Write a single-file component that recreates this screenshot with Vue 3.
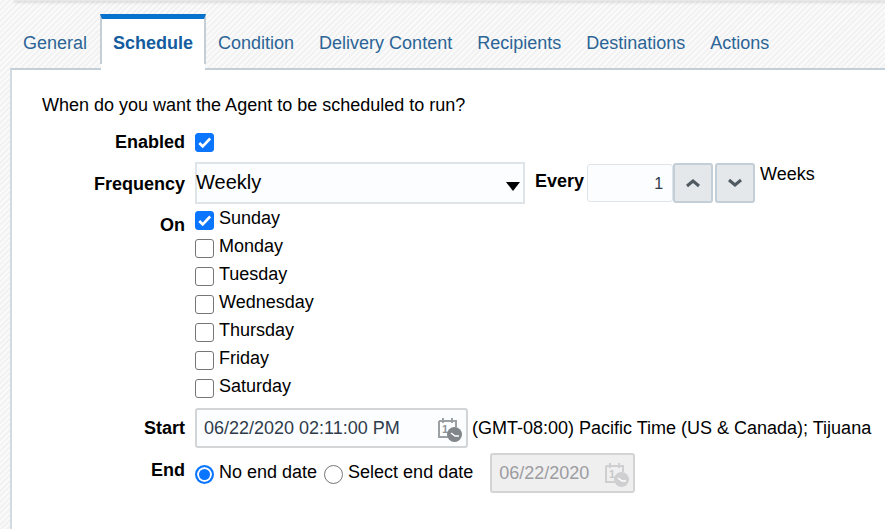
<template>
  <div class="page">
    <div class="top-shadow"></div>

    <!-- tabs -->
    <nav class="tabs">
      <a
        v-for="tab in tabs"
        :key="tab"
        href="javascript:;"
        class="tab"
        :class="{ active: tab === 'Schedule' }"
      >{{ tab }}</a>
    </nav>

    <section class="panel">
      <p class="question">When do you want the Agent to be scheduled to run?</p>

      <div class="form">
        <div class="row row-enabled">
          <label class="lbl">Enabled</label>
          <span class="cb on"><svg viewBox="0 0 18 18"><path d="M3.5 9.5l3.6 3.6L15 4.8" /></svg></span>
        </div>

        <div class="row row-freq">
          <label class="lbl freq-lbl">Frequency</label>
          <div class="select">
            <span class="select-value">Weekly</span>
            <i class="caret"></i>
          </div>
          <label class="lbl every">Every</label>
          <div class="number">1</div>
          <button class="spin first">
            <svg viewBox="0 0 14 10"><path d="M1 8l6-5 6 5" /></svg>
          </button>
          <button class="spin">
            <svg viewBox="0 0 14 10"><path d="M1 2l6 5 6-5" /></svg>
          </button>
          <span class="weeks">Weeks</span>
        </div>

        <div class="row row-on">
          <label class="lbl on-lbl">On</label>
          <ul class="days">
            <li v-for="day in days" :key="day.name">
              <span class="cb" :class="{ on: day.checked }">
                <svg v-if="day.checked" viewBox="0 0 18 18"><path d="M3.5 9.5l3.6 3.6L15 4.8" /></svg>
              </span>
              <span class="day-name">{{ day.name }}</span>
            </li>
          </ul>
        </div>

        <div class="row row-start">
          <label class="lbl">Start</label>
          <div class="date start-date">
            <span>06/22/2020 02:11:00 PM</span>
            <svg class="cal" viewBox="0 0 26 28">
              <path class="cal-line" d="M2 5h17v6M2 5v16h9M6 2v5M15 2v5" />
              <text x="5" y="17" class="cal-num">1</text>
              <circle cx="17.5" cy="18.5" r="7.5" class="cal-disc" />
              <path class="cal-hand" d="M14 17l4 3h4" />
            </svg>
          </div>
          <span class="zone">(GMT-08:00) Pacific Time (US &amp; Canada); Tijuana</span>
        </div>

        <div class="row row-end">
          <label class="lbl end-lbl">End</label>
          <span class="radio on"></span>
          <span class="radio-text">No end date</span>
          <span class="radio second"></span>
          <span class="radio-text">Select end date</span>
          <div class="date end-date">
            <span>06/22/2020</span>
            <svg class="cal" viewBox="0 0 26 28">
              <path class="cal-line" d="M2 5h17v6M2 5v16h9M6 2v5M15 2v5" />
              <text x="5" y="17" class="cal-num">1</text>
              <circle cx="17.5" cy="18.5" r="7.5" class="cal-disc" />
              <path class="cal-hand" d="M14 17l4 3h4" />
            </svg>
          </div>
        </div>
      </div>
    </section>
  </div>
</template>

<script setup>
const tabs = ['General', 'Schedule', 'Condition', 'Delivery Content', 'Recipients', 'Destinations', 'Actions'];

const days = [
  { name: 'Sunday', checked: true },
  { name: 'Monday', checked: false },
  { name: 'Tuesday', checked: false },
  { name: 'Wednesday', checked: false },
  { name: 'Thursday', checked: false },
  { name: 'Friday', checked: false },
  { name: 'Saturday', checked: false },
];
</script>

<style>
html, body {
  margin: 0;
  height: 100%;
  overflow: hidden;
}
</style>

<style scoped>
.page {
  position: relative;
  width: 885px;
  height: 529px;
  overflow: hidden;
  font-family: "Liberation Sans", Arial, sans-serif;
  font-size: 18px;
  color: #000;
  background: repeating-linear-gradient(135deg, #fafafa 0, #fafafa 2px, #f2f2f2 2px, #f2f2f2 4px);
}

.top-shadow {
  position: absolute;
  top: 0;
  left: 14px;
  right: 0;
  height: 1px;
  background: #e8e8e8;
  box-shadow: 0 1px 3px rgba(0, 0, 0, 0.3);
}

.tabs {
  display: flex;
  height: 54px;
  padding: 14px 0 0 11px;
}

.tab {
  box-sizing: border-box;
  height: 54px;
  padding: 5px 13px 0 12px;
  line-height: 49px;
  color: #2b6496;
  text-decoration: none;
  white-space: nowrap;
}

.tab:first-child {
  padding-right: 1px;
  margin-right: 0;
  width: 89px;
}

.tab.active {
  position: relative;
  z-index: 1;
  height: 50px;
  padding: 0 11px;
  border-top: 5px solid #0572ce;
  border-left: 2px solid #c4ced7;
  border-right: 2px solid #c4ced7;
  background: #fff;
  font-weight: 700;
  color: #145c9e;
}

/* white foot of the active tab, covers the panel border */
.tab.active::after {
  content: "";
  position: absolute;
  left: -1px;
  right: -1px;
  top: 45px;
  height: 6px;
  background: #fff;
}

.panel {
  box-sizing: border-box;
  height: 461px;
  margin-left: 10px;
  padding: 24px 0 0 30px;
  border-top: 2px solid #c4ced7;
  border-left: 2px solid #d3dbe2;
  background: #fff;
}

.question {
  margin: 0;
  line-height: 22px;
}

.form {
  margin-top: 15px;
  margin-left: -42px;
  color: #000;
}

.row {
  display: flex;
}

.lbl {
  flex: none;
  width: 185px;
  text-align: right;
  font-weight: 700;
  white-space: nowrap;
}

.row-enabled {
  height: 22px;
  align-items: center;
}

.row-enabled .cb {
  margin-left: 10px;
}

.cb {
  box-sizing: border-box;
  display: inline-flex;
  flex: none;
  width: 19px;
  height: 19px;
  border: 1px solid #767676;
  border-radius: 3px;
  background: #fff;
}

.cb.on {
  border-color: #0a75ff;
  background: #0a75ff;
}

.cb svg {
  width: 100%;
  height: 100%;
}

.cb path {
  fill: none;
  stroke: #fff;
  stroke-width: 2.8;
}

.row-freq {
  align-items: center;
  height: 42px;
  margin-top: 9px;
}

.freq-lbl {
  padding-top: 2px;
}

.select {
  box-sizing: border-box;
  display: flex;
  align-items: center;
  justify-content: space-between;
  width: 330px;
  height: 42px;
  margin-left: 10px;
  padding: 0 3px 0 0;
  border: 2px solid #dfe4e8;
  background: #fbfdff;
  font-size: 20px;
}

.select-value {
  margin: -2px 0 0 -1px;
}

.caret {
  width: 0;
  height: 0;
  margin: 6px 0 0;
  border-left: 7px solid transparent;
  border-right: 7px solid transparent;
  border-top: 9px solid #000;
}

.every {
  width: auto;
  margin-left: 10px;
  margin-top: -4px;
}

.number {
  box-sizing: border-box;
  width: 86px;
  height: 38px;
  margin: -1px 0 0 3px;
  padding-right: 9px;
  border: 1px solid #dfe4e8;
  border-radius: 3px;
  background: #fbfdff;
  text-align: right;
  line-height: 38px;
  font-size: 16px;
  color: #2f3b4a;
}

.spin {
  box-sizing: border-box;
  display: flex;
  align-items: center;
  justify-content: center;
  width: 40px;
  height: 40px;
  padding: 0;
  margin: -1px 0 0 0;
  border: 2px solid #c4ced7;
  border-radius: 3px;
  background: #e4e8eb;
}

.spin.first {
  margin-right: 2px;
}

.spin svg {
  width: 14px;
  height: 10px;
}

.spin path {
  fill: none;
  stroke: #4f5a61;
  stroke-width: 3;
}

.weeks {
  margin: -17px 0 0 5px;
  color: #000;
}

.row-on {
  margin-top: 1px;
}

.on-lbl {
  padding-top: 9px;
  line-height: 22px;
}

.days {
  list-style: none;
  margin: 0 0 0 10px;
  padding: 0;
}

.days li {
  display: flex;
  height: 28px;
  align-items: flex-start;
}

.days .cb {
  margin-top: 6px;
}

.day-name {
  margin-left: 5px;
  line-height: 22px;
  margin-top: 2px;
}

.row-start {
  align-items: center;
  height: 40px;
  margin-top: 7px;
}

.date {
  box-sizing: border-box;
  display: flex;
  align-items: center;
  justify-content: space-between;
  height: 40px;
  border: 2px solid #d2d5d8;
  border-radius: 3px;
}

.start-date {
  width: 273px;
  margin-left: 10px;
  padding: 0 3px 0 7px;
  background: #fbfdff;
  color: #2f3b4a;
}

.zone {
  margin-left: 4px;
  white-space: nowrap;
}

.cal {
  width: 26px;
  height: 28px;
  margin-top: 3px;
}

.cal-line {
  fill: none;
  stroke: #9aa0a4;
  stroke-width: 2;
}

.cal-num {
  font-size: 11px;
  font-weight: 700;
  fill: #8f9599;
}

.cal-disc {
  fill: #808689;
}

.cal-hand {
  fill: none;
  stroke: #fff;
  stroke-width: 1.5;
}

.row-end {
  align-items: center;
  height: 40px;
  margin-top: 5px;
}

.end-lbl {
  margin-top: -6px;
}

.radio {
  box-sizing: border-box;
  flex: none;
  width: 19px;
  height: 19px;
  margin-left: 10px;
  margin-top: 2px;
  border: 1px solid #767676;
  border-radius: 50%;
  background: #fff;
}

.radio.on {
  border: 2px solid #0a75ff;
  background: #0a75ff;
  box-shadow: inset 0 0 0 2px #fff;
}

.radio.second {
  margin-left: 7px;
}

.radio-text {
  margin-left: 5px;
  margin-top: -2px;
  white-space: nowrap;
}

.end-date {
  width: 145px;
  margin-left: 17px;
  padding: 0 3px 0 7px;
  background: #efeff0;
  border-color: #d4d4d6;
  color: #9c9ca0;
}

.end-date .cal-line {
  stroke: #cfcfd1;
}

.end-date .cal-num {
  fill: #c8c8ca;
}

.end-date .cal-disc {
  fill: #cfcfd1;
}
</style>
